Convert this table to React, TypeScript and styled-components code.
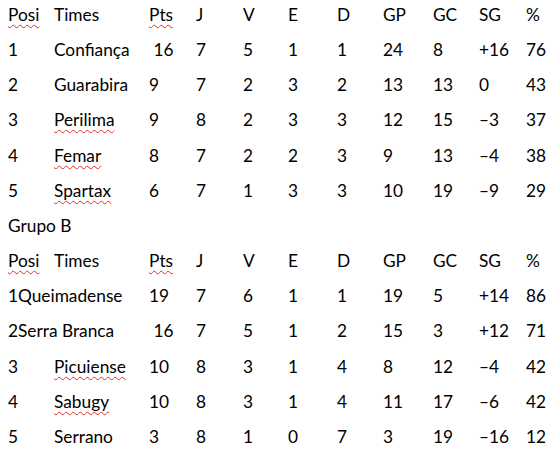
import React from "react";
import styled, { createGlobalStyle } from "styled-components";

const Global = createGlobalStyle`
  html, body { margin: 0; padding: 0; background: #ffffff; }
  body { font-family: Lato, "Open Sans", sans-serif; color: #000; }
`;

const Page = styled.div`
  padding: 3px 0 0 8px;
  font-size: 17.3px;
`;

const Row = styled.div`
  display: grid;
  grid-template-columns: 46px 95px 47px 47px 45px 49px 46px 50px 46px 47px 28px;
  height: 35.17px;
  line-height: 24px;
  align-items: start;
  white-space: pre;
`;

const Cell = styled.span<{ $span?: number }>`
  grid-column: span ${(p) => p.$span ?? 1};
`;

const Squiggle = styled.span`
  text-decoration: underline wavy #d9302a;
  text-decoration-thickness: 1px;
  text-underline-offset: 3px;
  text-decoration-skip-ink: none;
`;

const Caption = styled.div`
  height: 35.17px;
  line-height: 24px;
`;

type Team = {
  pos: string;
  name: string;
  typo?: boolean;
  joined?: boolean;
  vals: string[];
};

const groupA: Team[] = [
  { pos: "1", name: "Confiança", vals: [" 16", "7", "5", "1", "1", "24", "8", "+16", "76"] },
  { pos: "2", name: "Guarabira", vals: ["9", "7", "2", "3", "2", "13", "13", "0", "43"] },
  { pos: "3", name: "Perilima", typo: true, vals: ["9", "8", "2", "3", "3", "12", "15", "–3", "37"] },
  { pos: "4", name: "Femar", typo: true, vals: ["8", "7", "2", "2", "3", "9", "13", "–4", "38"] },
  { pos: "5", name: "Spartax", typo: true, vals: ["6", "7", "1", "3", "3", "10", "19", "–9", "29"] },
];

const groupB: Team[] = [
  { pos: "1", name: "Queimadense", joined: true, vals: ["19", "7", "6", "1", "1", "19", "5", "+14", "86"] },
  { pos: "2", name: "Serra Branca", joined: true, vals: [" 16", "7", "5", "1", "2", "15", "3", "+12", "71"] },
  { pos: "3", name: "Picuiense", typo: true, vals: ["10", "8", "3", "1", "4", "8", "12", "–4", "42"] },
  { pos: "4", name: "Sabugy", typo: true, vals: ["10", "8", "3", "1", "4", "11", "17", "–6", "42"] },
  { pos: "5", name: "Serrano", vals: ["3", "8", "1", "0", "7", "3", "19", "–16", "12"] },
];

const headers = ["J", "V", "E", "D", "GP", "GC", "SG", "%"];

function Header() {
  return (
    <Row>
      <Cell><Squiggle>Posi</Squiggle></Cell>
      <Cell>Times</Cell>
      <Cell><Squiggle>Pts</Squiggle></Cell>
      {headers.map((h) => (
        <Cell key={h}>{h}</Cell>
      ))}
    </Row>
  );
}

function TeamRow({ t }: { t: Team }) {
  return (
    <Row>
      {t.joined ? (
        <Cell $span={2}>{t.pos + t.name}</Cell>
      ) : (
        <>
          <Cell>{t.pos}</Cell>
          <Cell>{t.typo ? <Squiggle>{t.name}</Squiggle> : t.name}</Cell>
        </>
      )}
      {t.vals.map((v, i) => (
        <Cell key={i}>{v}</Cell>
      ))}
    </Row>
  );
}

export default function App() {
  return (
    <>
      <Global />
      <Page>
        <Header />
        {groupA.map((t) => (
          <TeamRow key={t.name} t={t} />
        ))}
        <Caption>Grupo B</Caption>
        <Header />
        {groupB.map((t) => (
          <TeamRow key={t.name} t={t} />
        ))}
      </Page>
    </>
  );
}
